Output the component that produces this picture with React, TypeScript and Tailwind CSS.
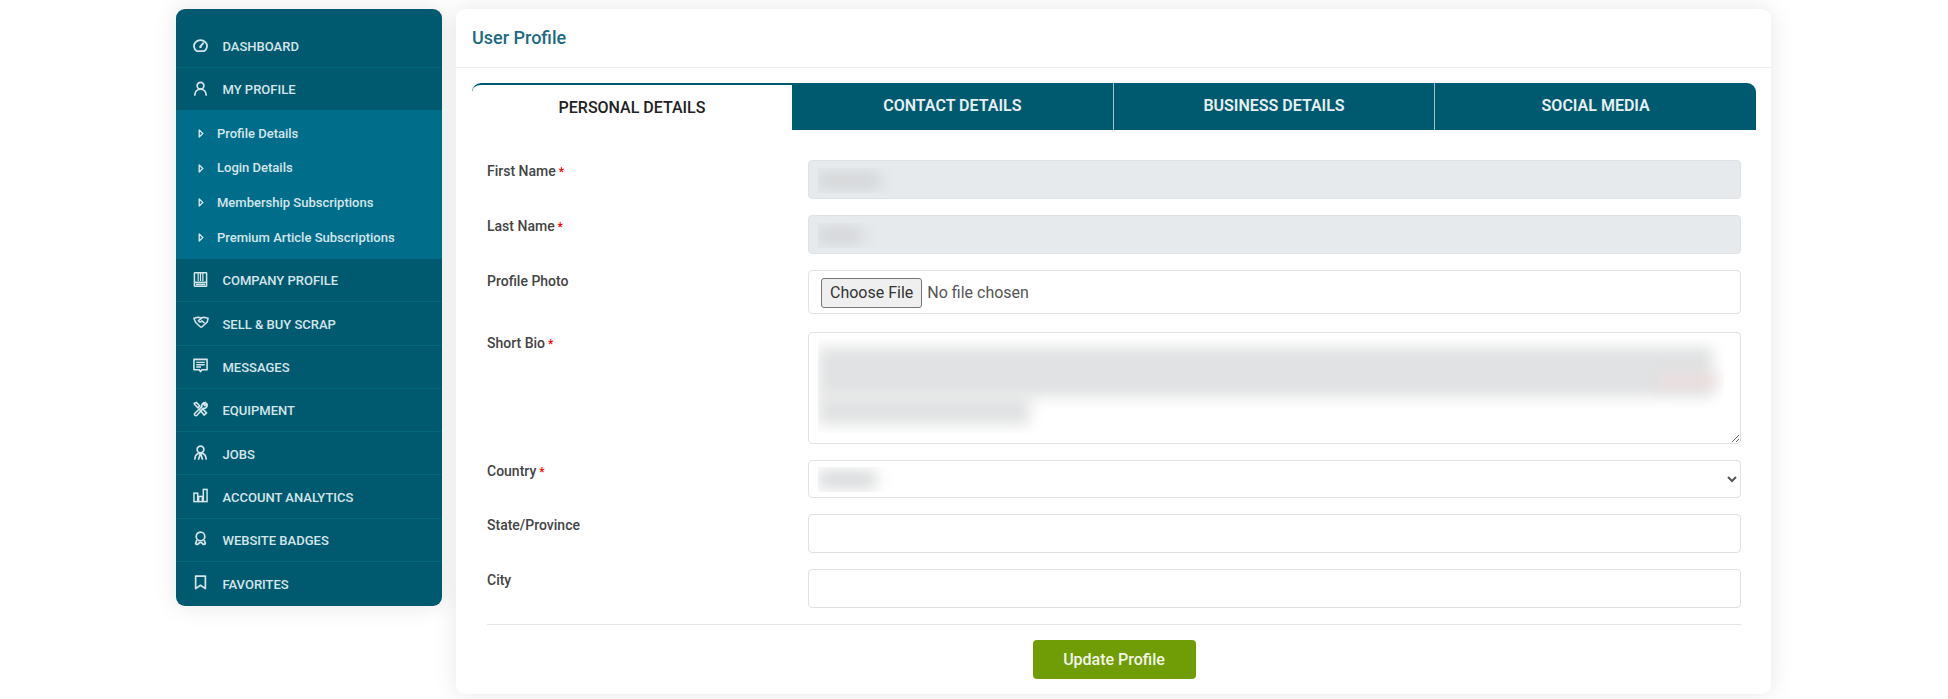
const font = "font-['Roboto',sans-serif]";

function GaugeIcon() {
  return (
    <svg viewBox="0 0 16 14" className="w-[15px] h-[13px]" fill="none" stroke="currentColor" strokeWidth="1.9">
      <path d="M4 13h8a7 6.500 0 1 0-8 0Z" strokeLinejoin="round" />
      <path d="M8 8 11 4.500" strokeLinecap="round" />
      <circle cx="8" cy="8.500" r="1.300" fill="currentColor" stroke="none" />
    </svg>
  );
}
function UserIcon() {
  return (
    <svg viewBox="0 0 16 16" className="w-[15px] h-[15px]" fill="none" stroke="currentColor" strokeWidth="1.8">
      <circle cx="8" cy="5" r="3.600" />
      <path d="M2 15c.2-3.800 2.600-6.200 6-6.200s5.800 2.400 6 6.200" strokeLinecap="round" />
    </svg>
  );
}
function BuildingIcon() {
  return (
    <svg viewBox="0 0 16 16" className="w-[15px] h-[15px]" fill="none" stroke="currentColor" strokeWidth="1.600">
      <rect x="1.500" y="0.800" width="13" height="14.400" rx="0.500" />
      <path d="M5.500 1v8.500M8 1v8.500M10.500 1v8.500" strokeWidth="1.300" />
      <path d="M1.500 11h13" />
      <path d="M3 13.200h10" strokeWidth="1.800" />
    </svg>
  );
}
function HandshakeIcon() {
  return (
    <svg viewBox="0 0 18 14" className="w-[16px] h-[13px]" fill="none" stroke="currentColor" strokeWidth="1.700" strokeLinejoin="round">
      <path d="M1 2.200 6 1l3 1 3-1 5 1.200-1 4.300-6 5.500-1.500 0L3 7Z" />
      <path d="M10 2.200 6 5c.8 1.800 2.600 1.800 4 .2l3 2.500" />
    </svg>
  );
}
function MessageIcon() {
  return (
    <svg viewBox="0 0 16 16" className="w-[15px] h-[15px]" fill="none" stroke="currentColor" strokeWidth="1.700">
      <path d="M1 1.500h14v11H9.500L8 14.500 6.500 12.500H1Z" strokeLinejoin="round" />
      <path d="M3.500 4.600h9M3.500 7.200h9M3.500 9.600h5" strokeWidth="1.400" />
    </svg>
  );
}
function ToolsIcon() {
  return (
    <svg viewBox="0 0 16 16" className="w-[15px] h-[16px]" fill="none" stroke="currentColor" strokeWidth="1.700" strokeLinejoin="round">
      <path d="M1.200 2 3.500 1l3.800 3.800-2 2L2 3.500Z" />
      <path d="M7 8.500l4.800 6 2.700-2.300-5-5" />
      <path d="M14.800 2.500 12.800 4.500l-1.300-1.300 2-2a3.500 3.500 0 0 0-4 4.300L2 12.500a1.500 1.500 0 0 0 2.200 2.200L11 7.300a3.500 3.500 0 0 0 3.800-4.800Z" />
    </svg>
  );
}
function JobsIcon() {
  return (
    <svg viewBox="0 0 16 16" className="w-[15px] h-[15px]" fill="none" stroke="currentColor" strokeWidth="1.800">
      <circle cx="8" cy="4.800" r="3.600" />
      <path d="M2 15c.2-3.800 2.200-6.300 6-6.300s5.800 2.500 6 6.300M8 8.700 6 15M8 8.700l2 6.300" strokeLinecap="round" />
    </svg>
  );
}
function ChartIcon() {
  return (
    <svg viewBox="0 0 16 16" className="w-[15px] h-[15px]" fill="none" stroke="currentColor" strokeWidth="1.600">
      <rect x="1" y="5.500" width="4" height="9" />
      <rect x="6" y="9" width="4" height="5.500" />
      <rect x="11" y="1.500" width="4" height="13" />
    </svg>
  );
}
function BadgeIcon() {
  return (
    <svg viewBox="0 0 16 16" className="w-[15px] h-[15px]" fill="none" stroke="currentColor" strokeWidth="1.800">
      <circle cx="8" cy="5.800" r="4.600" />
      <path d="M4 9.500 2.800 13.500c.8 1 2.500 1 3.200-.2.5-.7 1-1.100 2-1.100s1.500.4 2 1.100c.7 1.200 2.400 1.200 3.200.2L12 9.500" strokeLinejoin="round" />
    </svg>
  );
}
function BookmarkIcon() {
  return (
    <svg viewBox="0 0 16 16" className="w-[15px] h-[15px]" fill="none" stroke="currentColor" strokeWidth="1.800">
      <path d="M2.800 1.200h10.400v13.300L8 11l-5.200 3.500Z" strokeLinejoin="round" />
    </svg>
  );
}

function NavRow({ icon, label, line = true, short }: { icon: React.ReactNode; label: string; line?: boolean; short?: boolean }) {
  return (
    <div className={`flex items-center pl-[17px] text-[#d5e6ea] ${short ? "h-[41.7px]" : "h-[43.3px]"} ${line ? "border-b border-[#00677f]" : ""}`}>
      <span className="w-[29.500px] flex -mt-[2px]">{icon}</span>
      <span className="text-[13px] font-medium uppercase mt-[2px]">{label}</span>
    </div>
  );
}

const subLinks = ["Profile Details", "Login Details", "Membership Subscriptions", "Premium Article Subscriptions"];

function Field({ label, required, children, className }: { label: string; required?: boolean; children: React.ReactNode; className?: string }) {
  return (
    <div className={`flex ${className ?? ""}`}>
      <label className="w-[321px] pt-[1px] text-[14px] leading-[20px] font-medium text-[#444]">
        {label}
        {required && <span className="text-[#f00] text-[12px]"> *</span>}
      </label>
      <div className="flex-1 relative">{children}</div>
    </div>
  );
}

// clipped blur where the source screenshot hides the value
function BlurBlob({ w, top = 8 }: { w: number; top?: number }) {
  return (
    <div className="absolute left-[10px] h-[25px] overflow-hidden pointer-events-none" style={{ width: w + 30, top }}>
      <div className="absolute left-0 top-[5px] h-[15px] bg-[#cfd1d3] blur-[8px]" style={{ width: w }} />
    </div>
  );
}

const inputCls = "block w-full h-[39px] rounded-[4px] border border-[#dee2e6] bg-white";

export default function App() {
  return (
    <div className={`${font} w-[1948px] h-[699px] overflow-hidden bg-white flex items-start gap-[14px] pl-[176px] pt-[9px]`}>
      <aside className="w-[266px] h-[597px] shrink-0 rounded-[9px] bg-[#005a6f] pt-[16px] shadow-[0_0_24px_rgba(0,0,0,0.1)] overflow-hidden">
        <NavRow icon={<GaugeIcon />} label="Dashboard" />
        <NavRow icon={<UserIcon />} label="My Profile" line={false} short />
        <div className="bg-[#006e8a] h-[149px] pt-[6px]">
          {subLinks.map((s) => (
            <div key={s} className="h-[34.700px] flex items-center pl-[22px] text-[13px] font-medium text-[#d5e6ea]">
              <svg viewBox="0 0 6 10" className="w-[6px] h-[9px] mr-[13px]" fill="none" stroke="currentColor" strokeWidth="1.500">
                <path d="M1 1l4 4-4 4Z" strokeLinejoin="round" />
              </svg>
              {s}
            </div>
          ))}
        </div>
        <NavRow icon={<BuildingIcon />} label="Company Profile" />
        <NavRow icon={<HandshakeIcon />} label="Sell & Buy Scrap" />
        <NavRow icon={<MessageIcon />} label="Messages" />
        <NavRow icon={<ToolsIcon />} label="Equipment" />
        <NavRow icon={<JobsIcon />} label="Jobs" />
        <NavRow icon={<ChartIcon />} label="Account Analytics" />
        <NavRow icon={<BadgeIcon />} label="Website Badges" />
        <NavRow icon={<BookmarkIcon />} label="Favorites" line={false} />
      </aside>

      <main className="w-[1315px] h-[685px] shrink-0 rounded-[9px] bg-white shadow-[0_0_24px_rgba(0,0,0,0.1)]">
        <div className="h-[59px] border-b border-[#eeeeee] pl-[16px] flex items-center">
          <h1 className="text-[18px] font-medium text-[#1b6a80] -mt-[1px]">User Profile</h1>
        </div>

        <div className="px-[16px] pt-[15px]">
          <div className="flex h-[47px] w-[1284px] text-[16px] font-semibold text-center">
            <div className="w-[320px] rounded-tl-[9px] border-t-2 border-[#005a6f] flex items-center justify-center text-[#222] font-medium">
              PERSONAL DETAILS
            </div>
            <div className="flex-1 bg-[#005a6f] text-[#e6f0f2] flex items-center justify-center border-r border-[#a8c4cb] pb-[2px]">CONTACT DETAILS</div>
            <div className="flex-1 bg-[#005a6f] text-[#e6f0f2] flex items-center justify-center border-r border-[#a8c4cb] pb-[2px]">BUSINESS DETAILS</div>
            <div className="flex-1 bg-[#005a6f] text-[#e6f0f2] flex items-center justify-center rounded-tr-[9px] pb-[2px]">SOCIAL MEDIA</div>
          </div>

          <form className="pl-[15px] w-[1269px] pt-[30px]">
            <Field label="First Name" required>
              <input disabled className={`${inputCls} !bg-[#e7eaed]`} />
              <BlurBlob w={62} />
            </Field>
            <Field label="Last Name" required className="mt-[16px]">
              <input disabled className={`${inputCls} !bg-[#e7eaed]`} />
              <BlurBlob w={44} />
            </Field>
            <Field label="Profile Photo" className="mt-[16px]">
              <input
                type="file"
                className="block w-full h-[44px] rounded-[4px] border border-[#dee2e6] bg-white pl-[12px] pt-[7px] pb-[5px] text-[16px] text-[#555] file:h-[30px] file:px-[8px] file:mr-[5px] file:border file:border-[#767676] file:rounded-[3px] file:bg-[#efefef] file:text-[#333] file:text-[16px]"
              />
            </Field>
            <Field label="Short Bio" required className="mt-[18px]">
              <textarea className="block w-full h-[112px] rounded-[4px] border border-[#dee2e6] bg-white" />
              <div className="absolute left-[10px] top-[7px] w-[906px] h-[94px] overflow-hidden pointer-events-none">
                <div className="absolute left-0 top-[8px] w-[895px] h-[50px] bg-[#e1e2e3] blur-[7px]" />
                <div className="absolute left-0 top-[56px] w-[212px] h-[30px] bg-[#e1e2e3] blur-[7px]" />
                <div className="absolute right-[6px] top-[36px] w-[60px] h-[12px] bg-[#eedddd] blur-[7px]" />
              </div>
            </Field>
            <Field label="Country" required className="mt-[16px]">
              <select className="block w-full h-[38px] rounded-[4px] border border-[#dee2e6] bg-white pl-[12px] text-[#555]">
                <option></option>
              </select>
              <BlurBlob w={58} top={7} />
            </Field>
            <Field label="State/Province" className="mt-[16px]">
              <input className={inputCls} />
            </Field>
            <Field label="City" className="mt-[16px]">
              <input className={inputCls} />
            </Field>
            <div className="mt-[16px] border-t border-[#e5e5e5] pt-[15px] flex justify-center">
              <button type="button" className="w-[163px] h-[39px] rounded-[4px] bg-[#709c06] text-[#f2f6e6] text-[16px] font-medium">
                Update Profile
              </button>
            </div>
          </form>
        </div>
      </main>
    </div>
  );
}
